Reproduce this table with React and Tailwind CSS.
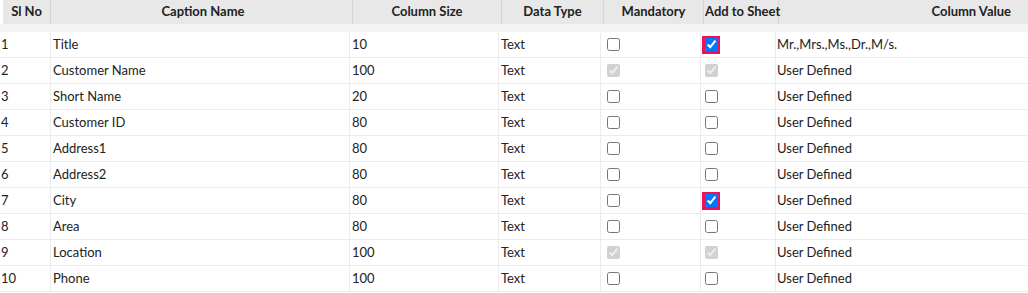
import React from "react";

const rows = [
  { no: 1, name: "Title", size: "10", man: "off", add: "on", val: "Mr.,Mrs.,Ms.,Dr.,M/s." },
  { no: 2, name: "Customer Name", size: "100", man: "dis", add: "dis", val: "User Defined" },
  { no: 3, name: "Short Name", size: "20", man: "off", add: "off", val: "User Defined" },
  { no: 4, name: "Customer ID", size: "80", man: "off", add: "off", val: "User Defined" },
  { no: 5, name: "Address1", size: "80", man: "off", add: "off", val: "User Defined" },
  { no: 6, name: "Address2", size: "80", man: "off", add: "off", val: "User Defined" },
  { no: 7, name: "City", size: "80", man: "off", add: "on", val: "User Defined" },
  { no: 8, name: "Area", size: "80", man: "off", add: "off", val: "User Defined" },
  { no: 9, name: "Location", size: "100", man: "dis", add: "dis", val: "User Defined" },
  { no: 10, name: "Phone", size: "100", man: "off", add: "off", val: "User Defined" },
];

const grid = "grid grid-cols-[51px_299px_149px_102px_100px_75px_1fr]";

function Box({ state }) {
  if (state === "on") {
    return (
      <span className="inline-flex w-[18px] h-[18px] items-center justify-center bg-[#ee1156]">
        <input type="checkbox" defaultChecked className="m-0 w-[13px] h-[13px]" />
      </span>
    );
  }
  return (
    <span className="inline-flex w-[18px] h-[18px] items-center justify-center">
      <input
        type="checkbox"
        defaultChecked={state === "dis"}
        disabled={state === "dis"}
        className="m-0 w-[13px] h-[13px]"
      />
    </span>
  );
}

export default function App() {
  const head = "h-6 flex items-center justify-center whitespace-nowrap border-r border-[#d6d6d6]";
  const cell = "h-full flex items-center border-r border-[#ececec]";
  return (
    <div className="w-[1028px] h-[293px] bg-white text-[13px] text-[#222] overflow-hidden" style={{ fontFamily: "Lato, 'Open Sans', sans-serif" }}>
      <div className={`${grid} bg-[#e8e8e8] font-bold ml-[3px]`}>
        <div className={`${head} w-[48px]`}>Sl No</div>
        <div className={head}>Caption Name</div>
        <div className={head}>Column Size</div>
        <div className={head}>Data Type</div>
        <div className={head}>Mandatory</div>
        <div className={`${head} justify-start pl-[1px]`}>Add to Sheet</div>
        <div className="h-6 flex items-center justify-end pr-[17px] whitespace-nowrap">Column Value</div>
      </div>
      <div className="h-[8px] bg-[#f4f4f4]" />
      {rows.map((r) => (
        <div key={r.no} className={`${grid} border-b border-[#ececec] h-[26px]`}>
          <div className={`${cell} pl-[1px]`}>{r.no}</div>
          <div className={`${cell} pl-[2px]`}>{r.name}</div>
          <div className={`${cell} pl-[2px]`}>{r.size}</div>
          <div className={`${cell} pl-[2px]`}>{r.type || "Text"}</div>
          <div className={`${cell} pl-[3px]`}><Box state={r.man} /></div>
          <div className={`${cell} pl-[1px]`}><Box state={r.add} /></div>
          <div className="h-full flex items-center pl-[1px]">{r.val}</div>
        </div>
      ))}
    </div>
  );
}
